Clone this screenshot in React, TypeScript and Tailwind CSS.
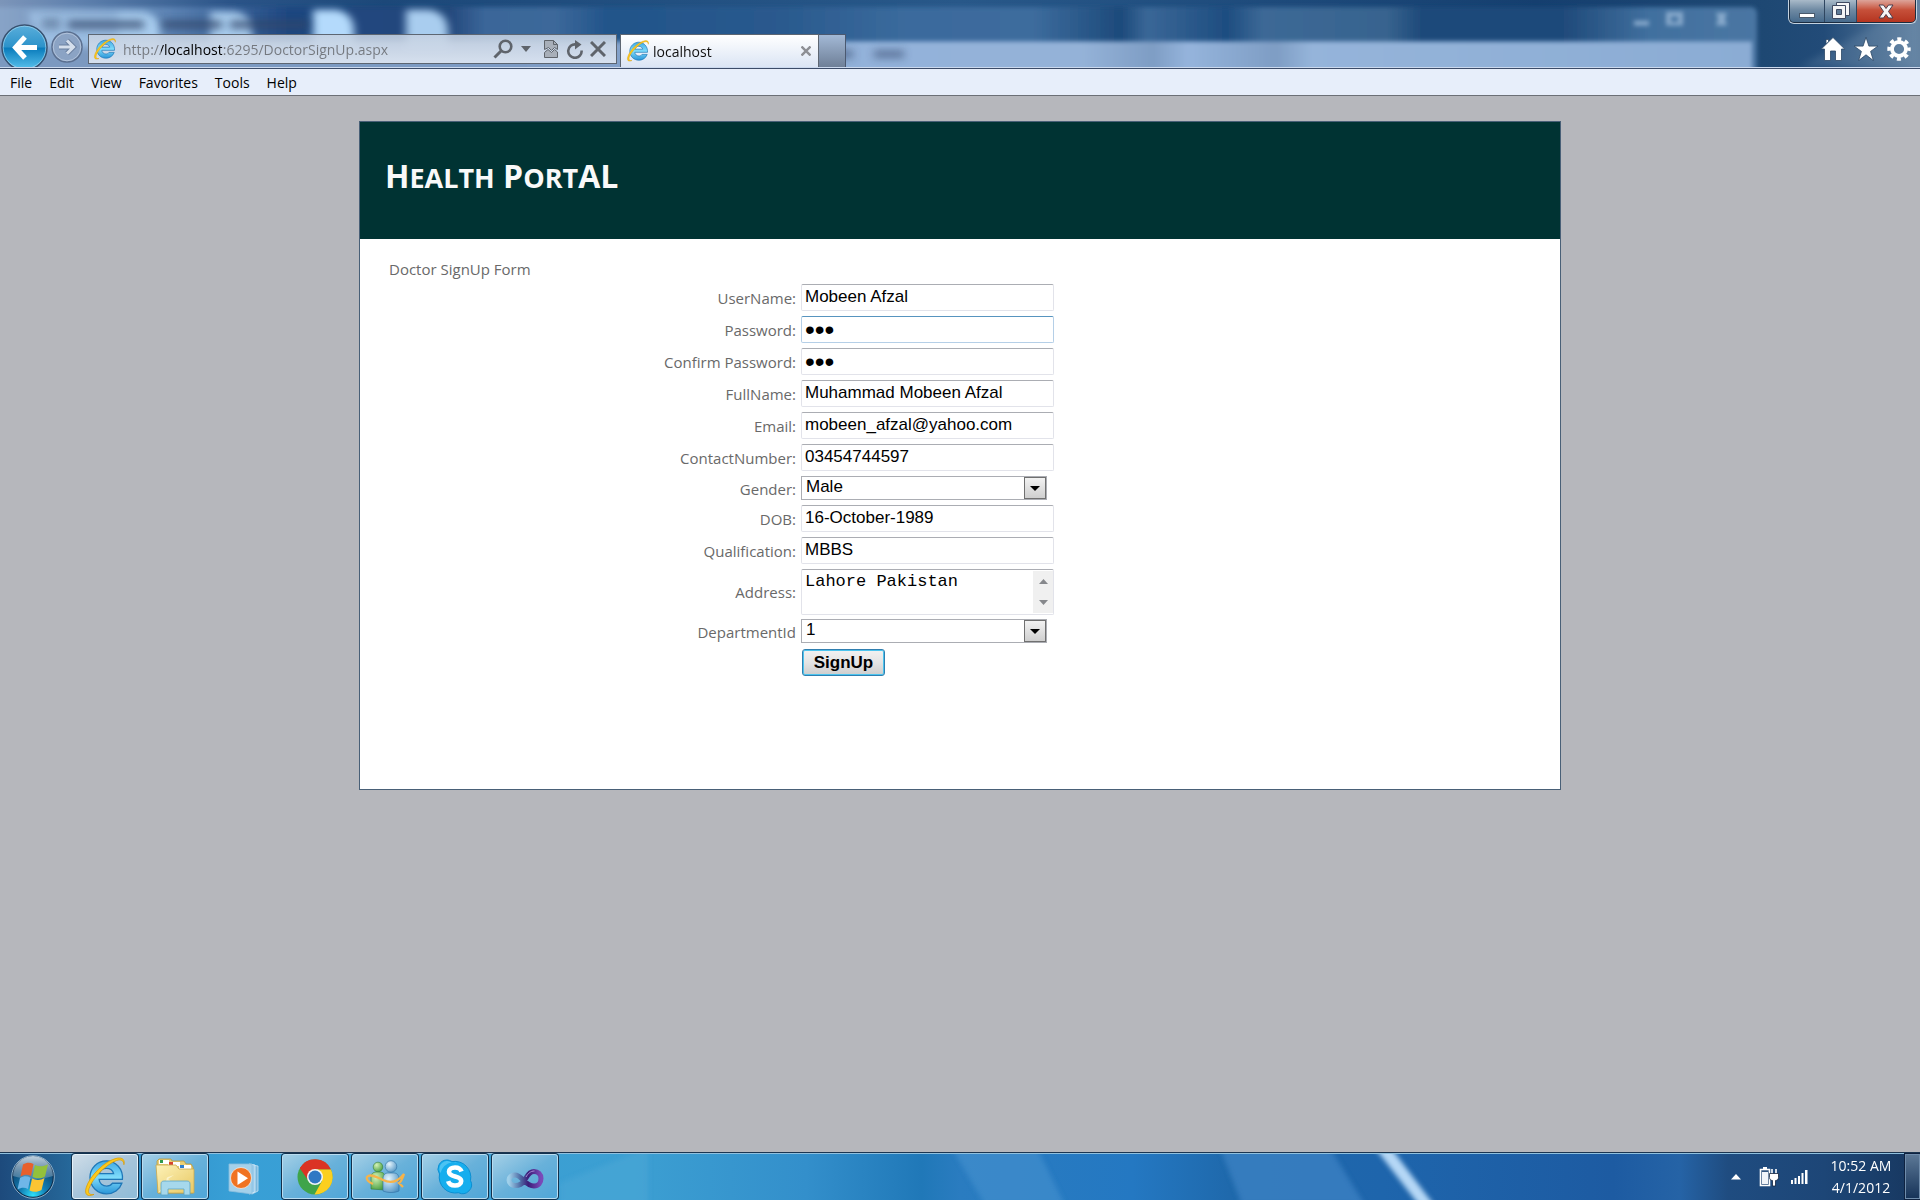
import React from "react";

const SEGOE = "font-['Open_Sans','Noto_Sans',sans-serif]";
const ARIAL = "font-['Liberation_Sans',Arial,sans-serif]";

function GlassBackdrop() {
  return (
    <svg className="absolute inset-0 h-full w-full" viewBox="0 0 1920 68" preserveAspectRatio="none" aria-hidden="true">
      <defs>
        <filter id="soft" x="-20%" y="-60%" width="140%" height="220%">
          <feGaussianBlur stdDeviation="4" />
        </filter>
        <filter id="softer" x="-20%" y="-60%" width="140%" height="220%">
          <feGaussianBlur stdDeviation="2" />
        </filter>
        <linearGradient id="base" x1="0" x2="1" y1="0" y2="0">
          <stop offset="0" stopColor="#7c95b9" />
          <stop offset="0.04" stopColor="#5f81ae" />
          <stop offset="0.12" stopColor="#2b5488" />
          <stop offset="0.2" stopColor="#1c4879" />
          <stop offset="0.5" stopColor="#285889" />
          <stop offset="0.8" stopColor="#153f6f" />
          <stop offset="0.92" stopColor="#1e4873" />
          <stop offset="0.95" stopColor="#224b78" />
          <stop offset="1" stopColor="#5f7f9f" />
        </linearGradient>
        <linearGradient id="title" x1="0" x2="1" y1="0" y2="0">
          <stop offset="0" stopColor="#8aa5c8" />
          <stop offset="0.1" stopColor="#5d84b4" />
          <stop offset="0.17" stopColor="#1d4680" />
          <stop offset="0.26" stopColor="#24487c" />
          <stop offset="0.28" stopColor="#3a6699" />
          <stop offset="0.32" stopColor="#3c689a" />
          <stop offset="0.35" stopColor="#22548a" />
          <stop offset="0.45" stopColor="#2a5a8e" />
          <stop offset="0.52" stopColor="#3b6b9d" />
          <stop offset="0.59" stopColor="#3d6c9d" />
          <stop offset="0.64" stopColor="#1d4a7b" />
          <stop offset="0.655" stopColor="#3a6797" />
          <stop offset="0.7" stopColor="#1e4d80" />
          <stop offset="0.72" stopColor="#3c6896" />
          <stop offset="0.79" stopColor="#38648f" />
          <stop offset="0.81" stopColor="#1f4a7a" />
          <stop offset="0.89" stopColor="#1f4a7a" />
          <stop offset="0.94" stopColor="#41709f" />
          <stop offset="1" stopColor="#4a76a3" />
        </linearGradient>
        <linearGradient id="client" x1="0" x2="1" y1="0" y2="0">
          <stop offset="0" stopColor="#7c99c0" />
          <stop offset="0.3" stopColor="#7d9bc4" />
          <stop offset="0.5" stopColor="#93b2da" />
          <stop offset="0.62" stopColor="#94b2d8" />
          <stop offset="0.66" stopColor="#7e9dc4" />
          <stop offset="0.68" stopColor="#95b4dc" />
          <stop offset="0.73" stopColor="#7e9dc4" />
          <stop offset="0.75" stopColor="#95b4da" />
          <stop offset="1" stopColor="#8bacd4" />
        </linearGradient>
      </defs>
      <rect width="1920" height="68" fill="url(#base)" />
      <rect x="-10" y="7" width="1767" height="70" rx="6" fill="url(#title)" filter="url(#softer)" />
      <rect x="-10" y="42" width="1762" height="40" fill="url(#client)" filter="url(#softer)" />
      <g filter="url(#soft)" fill="#a9cdef">
        <path d="M28 12h100v36H40z" opacity=".7" />
        <path d="M118 12h26q16 4 16 20v16h-42z" />
        <path d="M210 12h26q16 4 16 20v16h-42z" />
        <path d="M313 10h24q17 4 17 22v16h-41z" fill="#b4dafc" />
        <path d="M406 10h24q18 4 18 22v16h-42z" />
      </g>
      <g filter="url(#soft)" fill="#33476b" opacity=".65">
        <rect x="68" y="20" width="76" height="10" />
        <rect x="162" y="20" width="60" height="10" />
        <rect x="230" y="20" width="78" height="10" />
        <rect x="42" y="18" width="18" height="12" opacity=".6" />
        <rect x="825" y="50" width="28" height="10" opacity=".7" />
        <rect x="874" y="50" width="30" height="10" opacity=".7" />
      </g>
      <g filter="url(#softer)" fill="#86a8cb">
        <rect x="1634" y="21" width="15" height="5" />
        <path d="M1666 12h17v14h-17zm5 5v5h7v-5z" fillRule="evenodd" />
        <path d="M1716 13h11l-2 6 2 7h-11l2-7z" />
      </g>
      <path d="M1800 68L1920 0v68z" fill="#8aa6bf" opacity=".22" filter="url(#soft)" />
    </svg>
  );
}

function IeLogo({ className }: { className: string }) {
  return (
    <svg viewBox="0 0 24 24" className={className} aria-hidden="true">
      <defs>
        <linearGradient id="ieBlue" x1="0" x2="0" y1="0" y2="1">
          <stop offset="0" stopColor="#3fa9e4" />
          <stop offset="0.5" stopColor="#7fdcfb" />
          <stop offset="1" stopColor="#2a95d8" />
        </linearGradient>
      </defs>
      <path
        d="M12.8 3.2c-5 0-9 4-9 9s4 9 9 9c3.9 0 7.200-2.300 8.400-5.800h-5.100c-.7 1-1.900 1.600-3.200 1.600-2.200 0-4-1.600-4.100-3.700h12.700c.5-5.700-3.600-10.100-8.700-10.100zM8.900 10.200c.4-1.700 2-2.900 3.900-2.900s3.500 1.200 3.900 2.900z"
        fill="url(#ieBlue)"
        stroke="#1f78b8"
        strokeWidth=".7"
        fillRule="evenodd"
      />
      <path
        d="M22.300 5.300c.7-2.400-.5-4.100-3.600-3.600C12 3 3.500 11.500 1.700 17.900c-1 3.600.6 5.200 4.300 3.600-2.500.5-3.500-.7-2.700-3.200C5 13 12.200 5.300 18.300 3c2.600-.9 4 .1 4 2.300z"
        fill="#fcc91c"
        stroke="#d99a06"
        strokeWidth=".4"
      />
    </svg>
  );
}

function AddressBar() {
  return (
    <div className="flex h-[30px] w-[529px] items-center border border-[#5d6672] bg-gradient-to-b from-[#c3d0e1]/90 to-[#e0e8f3]/90 pr-[10px] pl-1">
      <IeLogo className="size-6" />
      <input
        aria-label="Address"
        className="ml-[6px] min-w-0 flex-1 bg-[linear-gradient(90deg,#74787e_38px,#000_38px,#000_99px,#74787e_99px)] bg-clip-text text-[14px] text-transparent outline-none"
        defaultValue="http://localhost:6295/DoctorSignUp.aspx"
      />
      <div className="flex items-center text-[#5f646b]">
        <button aria-label="Search">
          <svg viewBox="0 0 20 20" className="size-5" fill="none" stroke="currentColor">
            <circle cx="12.500" cy="7.500" r="5.800" strokeWidth="2.600" />
            <path d="M8.500 11.500L1.500 18.500" strokeWidth="3" />
          </svg>
        </button>
        <button aria-label="Show address history" className="ml-2">
          <svg viewBox="0 0 10 6" className="h-[6px] w-[10px]" fill="currentColor">
            <path d="M0 0h10L5 6z" />
          </svg>
        </button>
        <button aria-label="Compatibility view" className="ml-[13px]">
          <svg viewBox="0 0 14 18" className="h-[18px] w-[14px]" fill="#a8afb9" stroke="currentColor">
            <path d="M.5 9.500V.5h9l4 4v5l-3-2-3 3-3-3z" />
            <path d="M.5 12.500l3.500-3 3.500 3 3-3 3 2.500v5.500H.5z" />
            <path d="M9.500.5v4h4" fill="none" />
          </svg>
        </button>
        <button aria-label="Refresh" className="ml-2">
          <svg viewBox="0 0 18 19" className="h-[19px] w-[18px]" fill="none" stroke="currentColor">
            <path d="M15.600 10.500A6.700 6.700 0 1 1 10 4.500" strokeWidth="2.600" />
            <path d="M9 0l6.500 4.500L9 9.500z" fill="currentColor" stroke="none" />
          </svg>
        </button>
        <button aria-label="Stop" className="ml-[6px]">
          <svg viewBox="0 0 16 16" className="size-4" fill="none" stroke="currentColor" strokeWidth="3">
            <path d="M1 1l14 14M15 1L1 15" />
          </svg>
        </button>
      </div>
    </div>
  );
}

function WindowButtons() {
  const shade =
    "flex h-[22px] items-center justify-center border-r border-[#2f4660] bg-gradient-to-b from-[#a9bac9] via-[#6f8aa3] via-45% to-[#466a8c]";
  return (
    <div className="flex rounded-b-md border border-t-0 border-[#c3d2e0] bg-[#1b2c40] pr-px pb-px pl-px">
      <button aria-label="Minimize" className={`${shade} w-[35px] rounded-bl`}>
        <svg viewBox="0 0 16 5" className="mt-2 h-[5px] w-4">
          <rect x=".5" y=".5" width="15" height="4" fill="#fff" stroke="#4a5a6c" />
        </svg>
      </button>
      <button aria-label="Restore" className={`${shade} w-[32px]`}>
        <svg viewBox="0 0 18 18" className="h-[18px] w-[18px]" fill="#f4f4f6" stroke="#3f4961" fillRule="evenodd">
          <path d="M4.500.5h13v13h-13z" />
          <path d="M.5 3.500h13v13H.5z" />
          <path d="M4.500 7.500h5v5h-5z" fill="#5f7a96" />
        </svg>
      </button>
      <button
        aria-label="Close"
        className="flex h-[22px] w-[58px] items-center justify-center rounded-br bg-gradient-to-b from-[#dca49a] via-[#c6503a] via-45% to-[#b5341f]"
      >
        <svg viewBox="0 0 16 15" className="h-[15px] w-4" fill="#f6f4f5" stroke="#4a3c4c">
          <path d="M1 1h4.500L8 4.500 10.500 1H15l-4.500 6.500L15 14h-4.500L8 10.500 5.500 14H1l4.500-6.500z" />
        </svg>
      </button>
    </div>
  );
}

function BrowserChrome() {
  return (
    <header>
      <div className="relative flex h-[68px] items-end overflow-hidden border-b border-[#cbd9ee]">
        <GlassBackdrop />
        <div className="relative flex w-full items-end">
          <div className="flex h-[43px] items-start gap-[3px] pl-px">
            <button aria-label="Back" className="h-[43px]">
              <svg viewBox="0 0 47 47" className="size-[47px]">
                <defs>
                  <linearGradient id="backFill" x1="0" x2="0" y1="0" y2="1">
                    <stop offset="0" stopColor="#5aaedb" />
                    <stop offset="0.48" stopColor="#2d93ca" />
                    <stop offset="0.52" stopColor="#0a7cbc" />
                    <stop offset="1" stopColor="#5cc4ee" />
                  </linearGradient>
                </defs>
                <circle cx="23.500" cy="23.500" r="22.500" fill="url(#backFill)" stroke="#38506e" strokeWidth="1.500" />
                <circle cx="23.500" cy="23.500" r="21.300" fill="none" stroke="#9fd3ee" opacity=".7" />
                <path d="M24 13l-9.500 10.500L24 34M14 23.500h22" fill="none" stroke="#fff" strokeWidth="5" />
              </svg>
            </button>
            <button aria-label="Forward" className="mt-[7px]">
              <svg viewBox="0 0 32 32" className="size-8">
                <circle cx="16" cy="16" r="15" fill="#8ba3c4" stroke="#5b6f8f" strokeWidth="1.500" />
                <circle cx="16" cy="16" r="13.800" fill="none" stroke="#bccbe0" opacity=".8" />
                <path d="M16 9.500l6.500 6.500-6.500 6.500M8 16h13.500" fill="none" stroke="#6b80a0" strokeWidth="5" />
                <path d="M16 9.500l6.500 6.500-6.500 6.500M8 16h13.500" fill="none" stroke="#d5dfec" strokeWidth="3" />
              </svg>
            </button>
          </div>
          <div className="mb-[3px] ml-[5px]">
            <AddressBar />
          </div>
          <div className="ml-[3px] flex h-[33px] w-[199px] items-center border border-b-0 border-[#5d6672] bg-gradient-to-b from-white to-[#dbe5f4] pl-[5px]">
            <IeLogo className="size-6" />
            <span className="ml-[3px] flex-1 text-[14px] text-[#101010]">localhost</span>
            <button aria-label="Close tab" className="mr-[7px] text-[#8d8f94]">
              <svg viewBox="0 0 10 10" className="size-[10px]" fill="none" stroke="currentColor" strokeWidth="2.400">
                <path d="M.5.5l9 9M9.500.5l-9 9" />
              </svg>
            </button>
          </div>
          <button
            aria-label="New tab"
            className="h-[33px] w-[27px] border border-b-0 border-l-0 border-[#4b5970] bg-gradient-to-b from-[#a3b9d6] to-[#6f8098]"
          />
          <div className="ml-auto flex h-[67px] flex-col items-end pr-[3px]">
            <WindowButtons />
            <div className="mt-[13px] mr-[6px] flex items-center gap-[9px]">
              <button aria-label="Home">
                <svg viewBox="0 0 24 24" className="size-6" fill="#fff" stroke="#2c4766" strokeWidth=".8">
                  <path d="M12 .5L.3 12H3.500v11.500H9.500v-9.500h5v9.500h6V12h3.200L12 .5zM5 6.500v-4h2.500v2" />
                </svg>
              </button>
              <button aria-label="Favorites">
                <svg viewBox="0 0 24 24" className="size-6" fill="#fff" stroke="#2c4766" strokeWidth=".8">
                  <path d="M12 .2l2.900 8.900h9l-7.300 5.300 2.800 9.200L12 17.800l-7.400 5.800 2.800-9.200L.1 9.100h9z" />
                </svg>
              </button>
              <button aria-label="Tools">
                <svg viewBox="0 0 24 24" className="size-6" fill="none" stroke="#fff">
                  <circle cx="12" cy="12" r="7" strokeWidth="3.800" />
                  <circle cx="12" cy="12" r="9.900" strokeWidth="3.600" strokeDasharray="4 3.775" strokeDashoffset="2" />
                </svg>
              </button>
            </div>
          </div>
        </div>
      </div>
      <nav
        aria-label="Menu"
        className="flex h-7 items-center gap-[17px] border-t border-b border-t-[#3c4c68] border-b-[#6c6f76] bg-[#e7eefa] pl-[10px] text-[14px] text-black"
      >
        {["File", "Edit", "View", "Favorites", "Tools", "Help"].map((m) => (
          <button key={m}>{m}</button>
        ))}
      </nav>
    </header>
  );
}

const FIELD = `w-[253px] rounded-[2px] border bg-white pl-[3px] text-black outline-none ${ARIAL}`;
const EDGE = "border-[#e2e3ea] border-t-[#abadb3]";
const EDGE_HOT = "border-[#b5cfe7] border-t-[#5794bf]";

function Row({ id, label, tall, children }: { id: string; label: string; tall?: string; children: React.ReactNode }) {
  return (
    <div className={`grid grid-cols-[407px_1fr] gap-[5px] ${tall ?? "h-8"}`}>
      <label htmlFor={id} className="mb-1 self-center text-right text-[15px] leading-5 text-[#696969]">
        {label}
      </label>
      <div>{children}</div>
    </div>
  );
}

function TextRow({ id, label, value, type = "text", hot }: { id: string; label: string; value: string; type?: string; hot?: boolean }) {
  return (
    <Row id={id} label={label}>
      <input
        id={id}
        type={type}
        defaultValue={value}
        className={`${FIELD} block h-[27px] ${type === "password" ? "text-[28px]" : "pb-[2px] text-[17px]"} ${hot ? EDGE_HOT : EDGE}`}
      />
    </Row>
  );
}

function SelectRow({ id, label, value, tall }: { id: string; label: string; value: string; tall: string }) {
  return (
    <Row id={id} label={label} tall={tall}>
      <div className="relative h-6 w-[246px]">
        <select
          id={id}
          className={`block h-6 w-full appearance-none border border-[#abadb3] bg-white pb-[2px] pl-1 text-[17px] leading-5 text-black outline-none ${ARIAL}`}
        >
          <option>{value}</option>
        </select>
        <span className="pointer-events-none absolute top-px right-px flex h-[22px] w-[22px] items-center justify-center border border-[#707070] bg-gradient-to-b from-[#f2f2f2] to-[#cfcfcf]">
          <svg viewBox="0 0 10 5" className="h-[5px] w-[10px]">
            <path d="M0 0h10L5 5z" />
          </svg>
        </span>
      </div>
    </Row>
  );
}

function SignUpForm() {
  return (
    <form onSubmit={(e) => e.preventDefault()} className="mt-1">
      <TextRow id="user" label="UserName:" value="Mobeen Afzal" />
      <TextRow id="pass" label="Password:" value="abc" type="password" hot />
      <TextRow id="confirm" label="Confirm Password:" value="abc" type="password" />
      <TextRow id="full" label="FullName:" value="Muhammad Mobeen Afzal" />
      <TextRow id="email" label="Email:" value="mobeen_afzal@yahoo.com" />
      <TextRow id="contact" label="ContactNumber:" value="03454744597" />
      <SelectRow id="gender" label="Gender:" value="Male" tall="h-[29px]" />
      <TextRow id="dob" label="DOB:" value="16-October-1989" />
      <TextRow id="qual" label="Qualification:" value="MBBS" />
      <Row id="address" label="Address:" tall="h-[50px]">
        <div className="relative h-[46px] w-[253px]">
          <textarea
            id="address"
            defaultValue="Lahore Pakistan"
            className="block h-full w-full resize-none overflow-hidden rounded-[2px] border border-[#e2e3ea] border-t-[#abadb3] bg-white pt-[2px] pl-[3px] font-['Liberation_Mono','Courier_New',monospace] text-[17px] leading-5 text-black outline-none"
          />
          <span className="pointer-events-none absolute top-[2px] right-px bottom-[2px] flex w-5 flex-col items-center justify-between bg-[#f0f0f0] py-2">
            <svg viewBox="0 0 9 5" className="h-[5px] w-[9px]" fill="#86888c">
              <path d="M0 5h9L4.500 0z" />
            </svg>
            <svg viewBox="0 0 9 5" className="h-[5px] w-[9px]" fill="#86888c">
              <path d="M0 0h9L4.500 5z" />
            </svg>
          </span>
        </div>
      </Row>
      <SelectRow id="dept" label="DepartmentId" value="1" tall="h-[30px]" />
      <div className="pl-[413px]">
        <button
          type="submit"
          className={`h-[27px] w-[83px] rounded-[3px] border border-[#2f7fb0] bg-gradient-to-b from-[#f2f2f2] via-[#e4e4e4] via-50% to-[#cdcdcd] text-[17px] leading-5 font-bold text-black shadow-[inset_0_0_0_1px_#4cc4ee] ${ARIAL}`}
        >
          SignUp
        </button>
      </div>
    </form>
  );
}

function StartOrb() {
  return (
    <svg viewBox="0 0 44 44" className="size-11">
      <defs>
        <radialGradient id="orb" cx=".5" cy=".95" r=".8">
          <stop offset="0" stopColor="#2fe0fa" />
          <stop offset="0.4" stopColor="#127fb5" />
          <stop offset="1" stopColor="#0d3b66" />
        </radialGradient>
        <linearGradient id="orbShine" x1="0" x2="0" y1="0" y2="1">
          <stop offset="0" stopColor="#d6e4ee" stopOpacity=".9" />
          <stop offset="1" stopColor="#7fa2bb" stopOpacity=".45" />
        </linearGradient>
      </defs>
      <circle cx="22" cy="22" r="20.500" fill="url(#orb)" stroke="#0c2c4c" strokeWidth="1.500" />
      <path d="M2 21a20 20 0 0 1 40 0c-12 4-28 4-40 0z" fill="url(#orbShine)" />
      <circle cx="22" cy="22" r="21.300" fill="none" stroke="#a8c8de" opacity=".8" />
      <path d="M12 9.500c4-2.500 7-2.300 10.500-.5l-2.500 12c-3.500-1.800-6.500-1.800-10.500.5z" fill="#e8602c" />
      <path d="M24 10c4 1.800 8 1.800 13-.8l-3 12.300c-4 2.500-8.500 2.300-12.500.3z" fill="#93c13c" />
      <path d="M9 23c4-2.300 7-2.300 10.500-.3l-2.500 11.300c-3.500-2-6.500-1.800-10.500.5z" fill="#6fb6e8" />
      <path d="M21 23.500c4 2 8.500 2 12.500-.4l-3 11.800c-4 2.300-8 2.300-12 .5z" fill="#fbc433" />
    </svg>
  );
}

function FolderIcon() {
  return (
    <svg viewBox="0 0 40 40" className="size-10">
      <defs>
        <linearGradient id="folder" x1="0" x2="1" y1="0" y2="1">
          <stop offset="0" stopColor="#fdf2b8" />
          <stop offset="1" stopColor="#e8c863" />
        </linearGradient>
      </defs>
      <path d="M2 4l2-2h12l1 2h12l2 3h5l2 3v26H3z" fill="#e9cf76" stroke="#b9983e" strokeWidth=".8" />
      <path d="M4 3h10v4H4zM13 5h12v4H13zM24 8h12v4H24z" fill="#fff" />
      <path d="M5 3h3v3H5z" fill="#2f9a4c" />
      <path d="M14 5h4v3h-4z" fill="#d8432f" />
      <path d="M25 8h4v3h-4z" fill="#2d7fd0" />
      <path d="M1 8h20l3 4h15v24H3z" fill="url(#folder)" stroke="#c9a84e" strokeWidth=".8" />
      <path d="M3 36c4-5 8-10 9-15l-6 4 7-5 6-2-6 4 5 4z" fill="#fffbe0" opacity=".7" />
      <path d="M6 38V27c0-2 1-3 3-3h23c2 0 3 1 3 3v11h-6v-6H13v6z" fill="#a6d8ec" stroke="#5ba5c6" strokeWidth=".8" />
    </svg>
  );
}

function MediaIcon() {
  return (
    <svg viewBox="0 0 34 34" className="mt-1 size-[34px]">
      <path d="M24 3l6 1v25l-6 3z" fill="#79b7dd" stroke="#c6e3f4" strokeWidth=".8" />
      <path d="M21 2l6 1v27l-6 2z" fill="#9accec" stroke="#dbeefa" strokeWidth=".8" />
      <path d="M1 2h23v30L1 29z" fill="#a5d1ea" stroke="#8dbfdd" strokeWidth=".8" />
      <circle cx="13" cy="16" r="10.500" fill="#f07322" stroke="#fff" strokeWidth=".6" />
      <path d="M9.500 9.500L20 16.200 9.500 23z" fill="#fff" />
    </svg>
  );
}

function ChromeIcon() {
  return (
    <svg viewBox="0 0 36 36" className="size-9">
      <circle cx="18" cy="18" r="17.500" fill="#3fa44a" />
      <path d="M18 18L2.800 9.300A17.500 17.500 0 0 1 34 10.500H18z" fill="#db3324" />
      <path d="M18 10.500h16A17.500 17.500 0 0 1 17.500 35.500L25 22z" fill="#fbcf1f" />
      <path d="M2.800 9.300L11.500 22 18 18z" fill="#3fa44a" />
      <path d="M2.800 9.300L11 21l1-6 6-4.500L6 6z" fill="#db3324" />
      <circle cx="18" cy="18" r="8" fill="#f4f6f8" />
      <circle cx="18" cy="18" r="6.500" fill="#2f78c4" />
    </svg>
  );
}

function MessengerIcon() {
  return (
    <svg viewBox="0 0 40 34" className="h-[34px] w-10">
      <defs>
        <radialGradient id="gr" cx=".35" cy=".3" r=".8">
          <stop offset="0" stopColor="#d6f3b8" />
          <stop offset="1" stopColor="#429a3a" />
        </radialGradient>
        <radialGradient id="bl" cx=".35" cy=".3" r=".8">
          <stop offset="0" stopColor="#e6f5fd" />
          <stop offset="1" stopColor="#4e93c4" />
        </radialGradient>
      </defs>
      <circle cx="13" cy="7" r="4.800" fill="url(#gr)" stroke="#36803a" strokeWidth=".6" />
      <path d="M6 29V17c0-3 2-5 5-5h4c3 0 5 2 5 5v13z" fill="url(#gr)" stroke="#36803a" strokeWidth=".6" />
      <circle cx="26" cy="6.500" r="5.800" fill="url(#bl)" stroke="#2f6fa2" strokeWidth=".6" />
      <path d="M18 31V19c0-4 2-6 5-6h6c3 0 5 2 5 6v12c-5 2-11 2-16 0z" fill="url(#bl)" stroke="#2f6fa2" strokeWidth=".6" />
      <path
        d="M8 24C3 22 1 19 2 17c3-4 10 0 16 3s14 3 21-6c-2 6-3 8-5 9l4 4"
        fill="none"
        stroke="#f6b34a"
        strokeWidth="2.200"
      />
    </svg>
  );
}

function SkypeIcon() {
  return (
    <svg viewBox="0 0 36 36" className="size-9">
      <path
        d="M9.500 1c2.200 0 4 .6 5.500 1.600A16 16 0 0 1 33.500 21.500 9 9 0 0 1 21.500 33.700 16 16 0 0 1 2.500 15 9 9 0 0 1 9.500 1z"
        fill="#16aeee"
        stroke="#0b8fd2"
      />
      <path d="M9.500 2a8 8 0 0 0-6 12A15 15 0 0 1 30 9C26 4 20 2 15 3.600 13 2.500 11.500 2 9.500 2z" fill="#6fd0f7" opacity=".6" />
      <path
        d="M24.500 12.500c-1-3-3.500-4-6.500-4-3.500 0-6 1.500-6 4.300 0 6.200 12.200 3.200 12.200 9.200 0 3-2.700 4.500-6.200 4.500-3.300 0-6-1.300-6.800-4.300"
        fill="none"
        stroke="#fff"
        strokeWidth="4.600"
      />
    </svg>
  );
}

function InfinityIcon() {
  return (
    <svg viewBox="0 0 38 22" className="mt-1 h-[22px] w-[38px]" fill="none">
      <defs>
        <linearGradient id="inf" x1="0" x2="1" y1="0" y2="0">
          <stop offset="0" stopColor="#9fd0ea" />
          <stop offset="0.35" stopColor="#4f6da6" />
          <stop offset="0.6" stopColor="#3b1d78" />
          <stop offset="1" stopColor="#7a4ab8" />
        </linearGradient>
      </defs>
      <path
        d="M18 13c-2 3-5 4.500-8.500 4.500C5.500 17.500 3 15 3 12s2.500-5 6-5c7 0 10 11 19 11 4.500 0 7-3 7-7.500C35 6 32 3.500 28 3.500c-6 0-7 6-10 9.500"
        stroke="url(#inf)"
        strokeWidth="5"
      />
      <path d="M20 9c2-3.500 4.500-6 8.500-6" stroke="#a88ad6" strokeWidth="1" />
    </svg>
  );
}

const APPS = [
  { name: "Internet Explorer", icon: <IeLogo className="size-11" />, style: "bright" },
  { name: "Windows Explorer", icon: <FolderIcon />, style: "open" },
  { name: "Media Player", icon: <MediaIcon />, style: "idle" },
  { name: "Chrome", icon: <ChromeIcon />, style: "open" },
  { name: "Messenger", icon: <MessengerIcon />, style: "open" },
  { name: "Skype", icon: <SkypeIcon />, style: "open" },
  { name: "Visual Studio", icon: <InfinityIcon />, style: "open" },
];

const APP_STYLE: Record<string, string> = {
  bright: "border-[#e6f1f8] bg-gradient-to-br from-[#cfdde8] via-[#a6c4da] to-[#8fbcd8] shadow-[0_0_0_1px_#12314d]",
  open: "border-[#b9dcf0] bg-gradient-to-br from-[#a3cfe6] via-[#68b1da] to-[#4fa6d8] shadow-[0_0_0_1px_#12314d]",
  idle: "border-transparent",
};

function TaskbarBackdrop() {
  return (
    <svg className="absolute inset-0 h-full w-full" viewBox="0 0 1920 47" preserveAspectRatio="none" aria-hidden="true">
      <defs>
        <linearGradient id="bar" x1="0" x2="1" y1="0" y2="0">
          <stop offset="0" stopColor="#1d4a7c" />
          <stop offset="0.035" stopColor="#256698" />
          <stop offset="0.07" stopColor="#2e8fc8" />
          <stop offset="0.12" stopColor="#389fd6" />
          <stop offset="0.33" stopColor="#3c9fd2" />
          <stop offset="0.42" stopColor="#338fcb" />
          <stop offset="0.48" stopColor="#2078b8" />
          <stop offset="0.5" stopColor="#2a7cc0" />
          <stop offset="0.59" stopColor="#2478c2" />
          <stop offset="0.64" stopColor="#1f69ac" />
          <stop offset="0.72" stopColor="#1e65ac" />
          <stop offset="0.84" stopColor="#1d5ba2" />
          <stop offset="0.875" stopColor="#2563a6" />
          <stop offset="0.9" stopColor="#1f4c80" />
          <stop offset="0.95" stopColor="#1d4677" />
          <stop offset="1" stopColor="#17375f" />
        </linearGradient>
        <filter id="streak" x="-50%" width="200%">
          <feGaussianBlur stdDeviation="2.500" />
        </filter>
      </defs>
      <rect width="1920" height="47" fill="url(#bar)" />
      <g filter="url(#streak)">
        <path d="M952-5h85l28 57h-80z" fill="#4a95d2" opacity=".5" />
        <path d="M1220-5h110l35 57h-123z" fill="#4a8fd0" opacity=".5" />
        <path d="M1375-5h16l43 57h-15z" fill="#b6d8f6" />
        <path d="M560 30l88-35v57h-88z" fill="#5ab0dc" opacity=".3" />
      </g>
    </svg>
  );
}

function Taskbar() {
  return (
    <footer className="relative flex h-12 shrink-0 items-stretch overflow-hidden border-t border-[#1c3550]">
      <TaskbarBackdrop />
      <div className="relative flex w-full border-t border-[#8fc0de] pb-px">
        <button aria-label="Start" className="flex w-[72px] items-center pl-[11px]">
          <StartOrb />
        </button>
        <div className="flex gap-1">
          {APPS.map((a) => (
            <button
              key={a.name}
              aria-label={a.name}
              className={`flex w-[66px] items-center justify-center rounded-[3px] border ${APP_STYLE[a.style]}`}
            >
              {a.icon}
            </button>
          ))}
        </div>
        <div className="ml-auto flex items-center text-white">
          <button aria-label="Show hidden icons">
            <svg viewBox="0 0 10 6" className="h-[6px] w-[10px]" fill="currentColor">
              <path d="M0 5.500h10L5 0z" />
            </svg>
          </button>
          <svg viewBox="0 0 20 20" className="ml-[18px] size-5" aria-label="Battery" fill="none" stroke="#fff">
            <path d="M4 1h4" strokeWidth="2" />
            <path d="M1.500 2.500h9v16h-9z" fill="#35567f" strokeWidth="1.600" />
            <path d="M3 5h6v12H3z" fill="#f2f5fa" stroke="none" />
            <path d="M13 2v5M17 2v5" strokeWidth="1.600" />
            <path d="M10.500 6.500h9v4c0 2-1.500 3-3 3V19h-3v-5.500c-1.500 0-3-1-3-3z" fill="#fff" stroke="#14233c" strokeWidth=".8" />
          </svg>
          <svg viewBox="0 0 17 14" className="ml-[12px] h-[14px] w-[17px]" aria-label="Network" fill="#fff">
            <path d="M0 10h2v4H0zM3.500 8h2v6h-2zM7 6h2v8H7zM10.500 3h2v11h-2zM14 0h2.500v14H14z" />
          </svg>
          <button className="ml-[18px] w-[70px] text-center text-[14px] leading-[22px]">
            10:52 AM
            <br />
            4/1/2012
          </button>
          <button
            aria-label="Show desktop"
            className="ml-[9px] h-full w-[15px] border border-[#6f8cab] bg-gradient-to-b from-[#5c7896] to-[#173459] shadow-[0_0_0_1px_#0e2240]"
          />
        </div>
      </div>
    </footer>
  );
}

export default function App() {
  return (
    <div className={`flex min-h-screen flex-col bg-[#b6b7bc] ${SEGOE}`}>
      <BrowserChrome />
      <main className="flex-1 pt-[25px] pb-8">
        <div className="mx-auto min-h-[669px] w-full max-w-[1202px] border border-[#496077] bg-white">
          <div className="h-[117px] bg-[#003333] pt-8 pl-[25px]">
            <h1 className="text-[32px] leading-[44px] font-bold text-[#f9f9f9] uppercase">
              H<span className="text-[27px]">ealth</span> P<span className="text-[27px]">ort</span>AL
            </h1>
          </div>
          <div className="px-[29px] pt-[19px]">
            <p className="text-[15px] leading-[22px] text-[#696969]">Doctor SignUp Form</p>
            <SignUpForm />
          </div>
        </div>
      </main>
      <Taskbar />
    </div>
  );
}
